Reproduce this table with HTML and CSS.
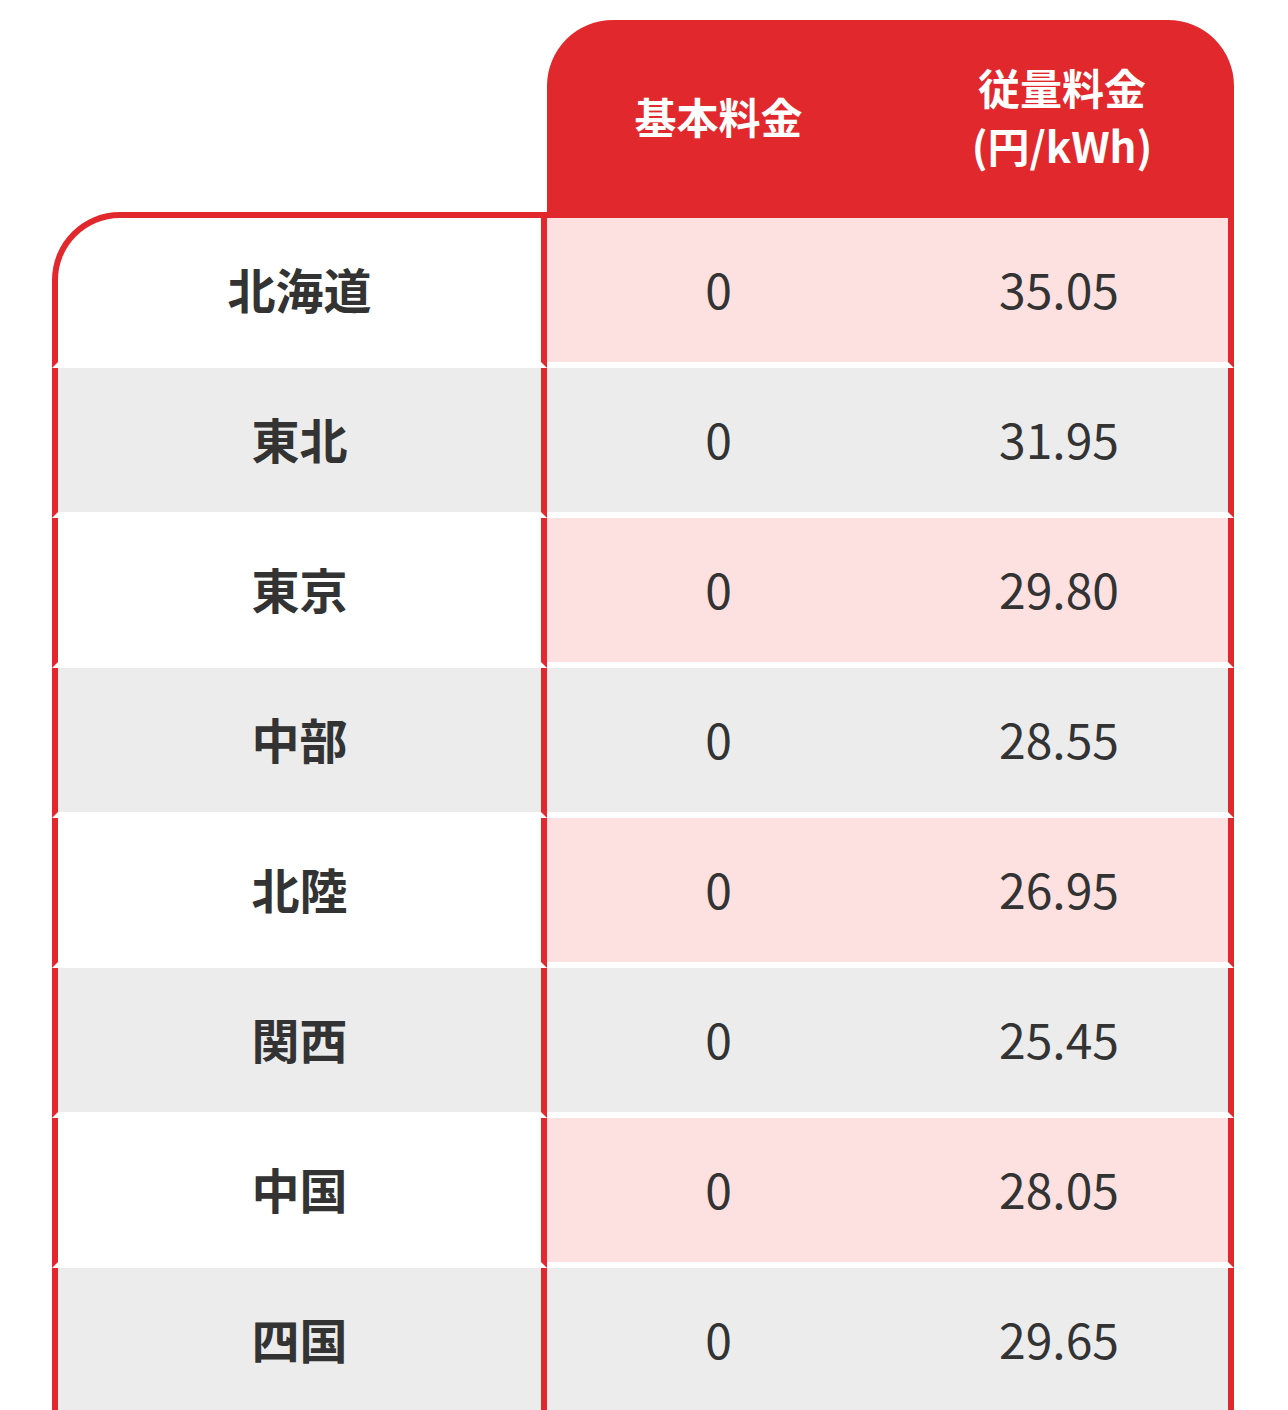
FILE: index.html
```html
<!DOCTYPE html>
<html lang="ja">
<head>
<meta charset="utf-8">
<title>料金表</title>
<link rel="stylesheet" href="styles.css">
</head>
<body>
<main class="page">
  <table class="price">
    <colgroup>
      <col class="c-area">
      <col class="c-base">
      <col class="c-rate">
    </colgroup>
    <thead>
      <tr>
        <th class="h-blank"></th>
        <th class="h-cell h-base">基本料金</th>
        <th class="h-cell h-rate">従量料金<br>(円/kWh)</th>
      </tr>
    </thead>
    <tbody>
      <tr class="odd first"><th class="area">北海道</th><td class="base">0</td><td class="rate">35.05</td></tr>
      <tr class="even"><th class="area">東北</th><td class="base">0</td><td class="rate">31.95</td></tr>
      <tr class="odd"><th class="area">東京</th><td class="base">0</td><td class="rate">29.80</td></tr>
      <tr class="even"><th class="area">中部</th><td class="base">0</td><td class="rate">28.55</td></tr>
      <tr class="odd"><th class="area">北陸</th><td class="base">0</td><td class="rate">26.95</td></tr>
      <tr class="even"><th class="area">関西</th><td class="base">0</td><td class="rate">25.45</td></tr>
      <tr class="odd"><th class="area">中国</th><td class="base">0</td><td class="rate">28.05</td></tr>
      <tr class="even"><th class="area">四国</th><td class="base">0</td><td class="rate">29.65</td></tr>
    </tbody>
  </table>
</main>
</body>
</html>
```

FILE: styles.css
```css
html, body {
  margin: 0;
  padding: 0;
  background: #ffffff;
}

.page {
  padding: 20px 54px 0 52px;
  font-family: "Noto Sans CJK JP", "Noto Sans", sans-serif;
  color: #333333;
}

.price {
  width: 1182px;
  table-layout: fixed;
  border-collapse: separate;
  border-spacing: 0;
}

.c-area { width: 495px; }
.c-base { width: 343px; }
.c-rate { width: 344px; }

.price th,
.price td {
  padding: 0;
  text-align: center;
  vertical-align: middle;
}

/* header */
.h-blank {
  background: transparent;
}

.h-cell {
  height: 192px;
  background: #e1282c;
  color: #ffffff;
  font-size: 42px;
  font-weight: 700;
  line-height: 58px;
}

.h-base {
  border-top-left-radius: 66px;
  padding-left: 3px;
}

.h-rate {
  border-top-right-radius: 66px;
}

/* body */
.price tbody th,
.price tbody td {
  height: 140px;
  padding-bottom: 4px;
  line-height: 140px;
  font-size: 48px;
  border-bottom: 6px solid #ffffff;
}

.area {
  font-weight: 700;
  border-left: 6px solid #e1282c;
  border-right: 6px solid #e1282c;
}

.base,
.rate {
  font-weight: 400;
}

.rate {
  border-right: 6px solid #e1282c;
}

.first th,
.first td {
  border-top: 6px solid #e1282c;
}

.first .area {
  border-top-left-radius: 68px;
}

.odd .area { background: #ffffff; }
.odd .base,
.odd .rate { background: #fde1e1; }

.even .area,
.even .base,
.even .rate { background: #ececec; }
```
